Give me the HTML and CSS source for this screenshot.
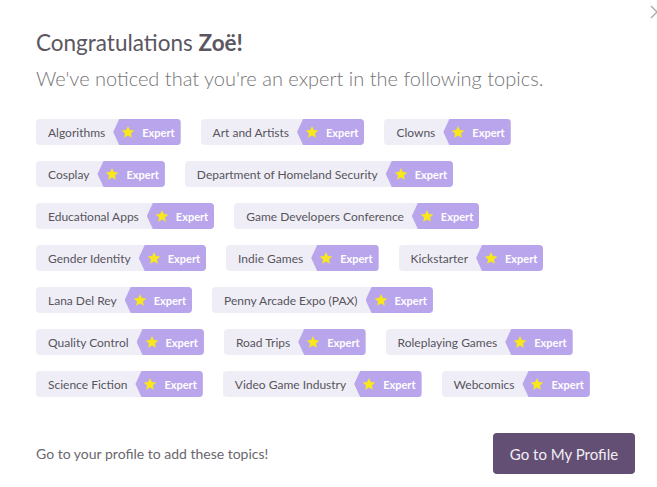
FILE: index.html
```html
<!DOCTYPE html>
<html lang="en">
<head>
<meta charset="utf-8">
<title>Congratulations</title>
<link rel="stylesheet" href="styles.css">
</head>
<body>
<div class="modal">
  <button class="close" aria-label="Close">
    <svg viewBox="0 0 14 14" width="14" height="14"><path d="M1 1 L13 13 M13 1 L1 13" stroke="#a9a9a9" stroke-width="1.3" fill="none"/></svg>
  </button>
  <h1 class="title">Congratulations <b>Zoë!</b></h1>
  <p class="subtitle">We've noticed that you're an expert in the following topics.</p>
  <ul class="tags">
    <li class="tag"><span class="name">Algorithms</span><span class="badge"><svg class="star" viewBox="0 0 24 24"><polygon points="12,1.5 15.1,8.6 22.8,9.3 17,14.4 18.7,22 12,18 5.3,22 7,14.4 1.2,9.3 8.9,8.6"/></svg>Expert</span></li>
    <li class="tag"><span class="name">Art and Artists</span><span class="badge"><svg class="star" viewBox="0 0 24 24"><polygon points="12,1.5 15.1,8.6 22.8,9.3 17,14.4 18.7,22 12,18 5.3,22 7,14.4 1.2,9.3 8.9,8.6"/></svg>Expert</span></li>
    <li class="tag"><span class="name">Clowns</span><span class="badge"><svg class="star" viewBox="0 0 24 24"><polygon points="12,1.5 15.1,8.6 22.8,9.3 17,14.4 18.7,22 12,18 5.3,22 7,14.4 1.2,9.3 8.9,8.6"/></svg>Expert</span></li>
    <li class="tag"><span class="name">Cosplay</span><span class="badge"><svg class="star" viewBox="0 0 24 24"><polygon points="12,1.5 15.1,8.6 22.8,9.3 17,14.4 18.7,22 12,18 5.3,22 7,14.4 1.2,9.3 8.9,8.6"/></svg>Expert</span></li>
    <li class="tag"><span class="name">Department of Homeland Security</span><span class="badge"><svg class="star" viewBox="0 0 24 24"><polygon points="12,1.5 15.1,8.6 22.8,9.3 17,14.4 18.7,22 12,18 5.3,22 7,14.4 1.2,9.3 8.9,8.6"/></svg>Expert</span></li>
    <li class="tag"><span class="name">Educational Apps</span><span class="badge"><svg class="star" viewBox="0 0 24 24"><polygon points="12,1.5 15.1,8.6 22.8,9.3 17,14.4 18.7,22 12,18 5.3,22 7,14.4 1.2,9.3 8.9,8.6"/></svg>Expert</span></li>
    <li class="tag"><span class="name">Game Developers Conference</span><span class="badge"><svg class="star" viewBox="0 0 24 24"><polygon points="12,1.5 15.1,8.6 22.8,9.3 17,14.4 18.7,22 12,18 5.3,22 7,14.4 1.2,9.3 8.9,8.6"/></svg>Expert</span></li>
    <li class="tag"><span class="name">Gender Identity</span><span class="badge"><svg class="star" viewBox="0 0 24 24"><polygon points="12,1.5 15.1,8.6 22.8,9.3 17,14.4 18.7,22 12,18 5.3,22 7,14.4 1.2,9.3 8.9,8.6"/></svg>Expert</span></li>
    <li class="tag"><span class="name">Indie Games</span><span class="badge"><svg class="star" viewBox="0 0 24 24"><polygon points="12,1.5 15.1,8.6 22.8,9.3 17,14.4 18.7,22 12,18 5.3,22 7,14.4 1.2,9.3 8.9,8.6"/></svg>Expert</span></li>
    <li class="tag"><span class="name">Kickstarter</span><span class="badge"><svg class="star" viewBox="0 0 24 24"><polygon points="12,1.5 15.1,8.6 22.8,9.3 17,14.4 18.7,22 12,18 5.3,22 7,14.4 1.2,9.3 8.9,8.6"/></svg>Expert</span></li>
    <li class="tag"><span class="name">Lana Del Rey</span><span class="badge"><svg class="star" viewBox="0 0 24 24"><polygon points="12,1.5 15.1,8.6 22.8,9.3 17,14.4 18.7,22 12,18 5.3,22 7,14.4 1.2,9.3 8.9,8.6"/></svg>Expert</span></li>
    <li class="tag"><span class="name">Penny Arcade Expo (PAX)</span><span class="badge"><svg class="star" viewBox="0 0 24 24"><polygon points="12,1.5 15.1,8.6 22.8,9.3 17,14.4 18.7,22 12,18 5.3,22 7,14.4 1.2,9.3 8.9,8.6"/></svg>Expert</span></li>
    <li class="tag"><span class="name">Quality Control</span><span class="badge"><svg class="star" viewBox="0 0 24 24"><polygon points="12,1.5 15.1,8.6 22.8,9.3 17,14.4 18.7,22 12,18 5.3,22 7,14.4 1.2,9.3 8.9,8.6"/></svg>Expert</span></li>
    <li class="tag"><span class="name">Road Trips</span><span class="badge"><svg class="star" viewBox="0 0 24 24"><polygon points="12,1.5 15.1,8.6 22.8,9.3 17,14.4 18.7,22 12,18 5.3,22 7,14.4 1.2,9.3 8.9,8.6"/></svg>Expert</span></li>
    <li class="tag"><span class="name">Roleplaying Games</span><span class="badge"><svg class="star" viewBox="0 0 24 24"><polygon points="12,1.5 15.1,8.6 22.8,9.3 17,14.4 18.7,22 12,18 5.3,22 7,14.4 1.2,9.3 8.9,8.6"/></svg>Expert</span></li>
    <li class="tag"><span class="name">Science Fiction</span><span class="badge"><svg class="star" viewBox="0 0 24 24"><polygon points="12,1.5 15.1,8.6 22.8,9.3 17,14.4 18.7,22 12,18 5.3,22 7,14.4 1.2,9.3 8.9,8.6"/></svg>Expert</span></li>
    <li class="tag"><span class="name">Video Game Industry</span><span class="badge"><svg class="star" viewBox="0 0 24 24"><polygon points="12,1.5 15.1,8.6 22.8,9.3 17,14.4 18.7,22 12,18 5.3,22 7,14.4 1.2,9.3 8.9,8.6"/></svg>Expert</span></li>
    <li class="tag"><span class="name">Webcomics</span><span class="badge"><svg class="star" viewBox="0 0 24 24"><polygon points="12,1.5 15.1,8.6 22.8,9.3 17,14.4 18.7,22 12,18 5.3,22 7,14.4 1.2,9.3 8.9,8.6"/></svg>Expert</span></li>
  </ul>
  <div class="footer">
    <p class="hint">Go to your profile to add these topics!</p>
    <button class="primary">Go to My Profile</button>
  </div>
</div>
</body>
</html>
```

FILE: styles.css
```css
* { box-sizing: border-box; }
html, body { margin: 0; padding: 0; background: #fff; }
body {
  font-family: Lato, "Open Sans", sans-serif;
  width: 657px;
  height: 487px;
  overflow: hidden;
}
.modal {
  position: relative;
  padding: 29px 44px 0 36px;
}
.close {
  position: absolute;
  top: 5px;
  right: -7px;
  border: 0;
  background: none;
  padding: 0;
  width: 14px;
  height: 14px;
}
.close svg { display: block; }
.title {
  margin: 0;
  font-size: 22.5px;
  font-weight: 400;
  line-height: 28px;
  color: #5b5661;
}
.title b { font-weight: 700; }
.subtitle {
  margin: 9px 0 0;
  font-size: 20px;
  font-weight: 300;
  line-height: 24px;
  color: #757478;
}
.tags {
  list-style: none;
  margin: 29px 0 0;
  padding: 0;
  display: flex;
  flex-wrap: wrap;
  gap: 16px 20px;
}
.tag {
  display: flex;
  align-items: stretch;
  height: 26px;
  background: #efeef7;
  border-radius: 4px;
}
.name {
  display: flex;
  align-items: center;
  padding: 0 8px 0 12px;
  font-size: 12px;
  color: #57545c;
}
.badge {
  display: flex;
  align-items: center;
  gap: 7px;
  padding: 0 6px 0 8px;
  background: #b9a5ec;
  color: #fff;
  font-size: 11px;
  font-weight: 700;
  border-radius: 0 4px 4px 0;
  clip-path: polygon(6px 0, 100% 0, 100% 100%, 6px 100%, 0 50%);
}
.star {
  width: 14px;
  height: 14px;
  fill: #f8e71c;
  flex: none;
}
.footer {
  display: flex;
  align-items: center;
  justify-content: space-between;
  margin: 36px -22px 0 0;
}
.hint {
  margin: 0;
  font-size: 14px;
  color: #6a676e;
}
.primary {
  height: 41px;
  width: 142px;
  border: 0;
  border-radius: 4px;
  background: #644f74;
  color: #f1eef4;
  font-family: Lato, sans-serif;
  font-size: 15px;
}
```
